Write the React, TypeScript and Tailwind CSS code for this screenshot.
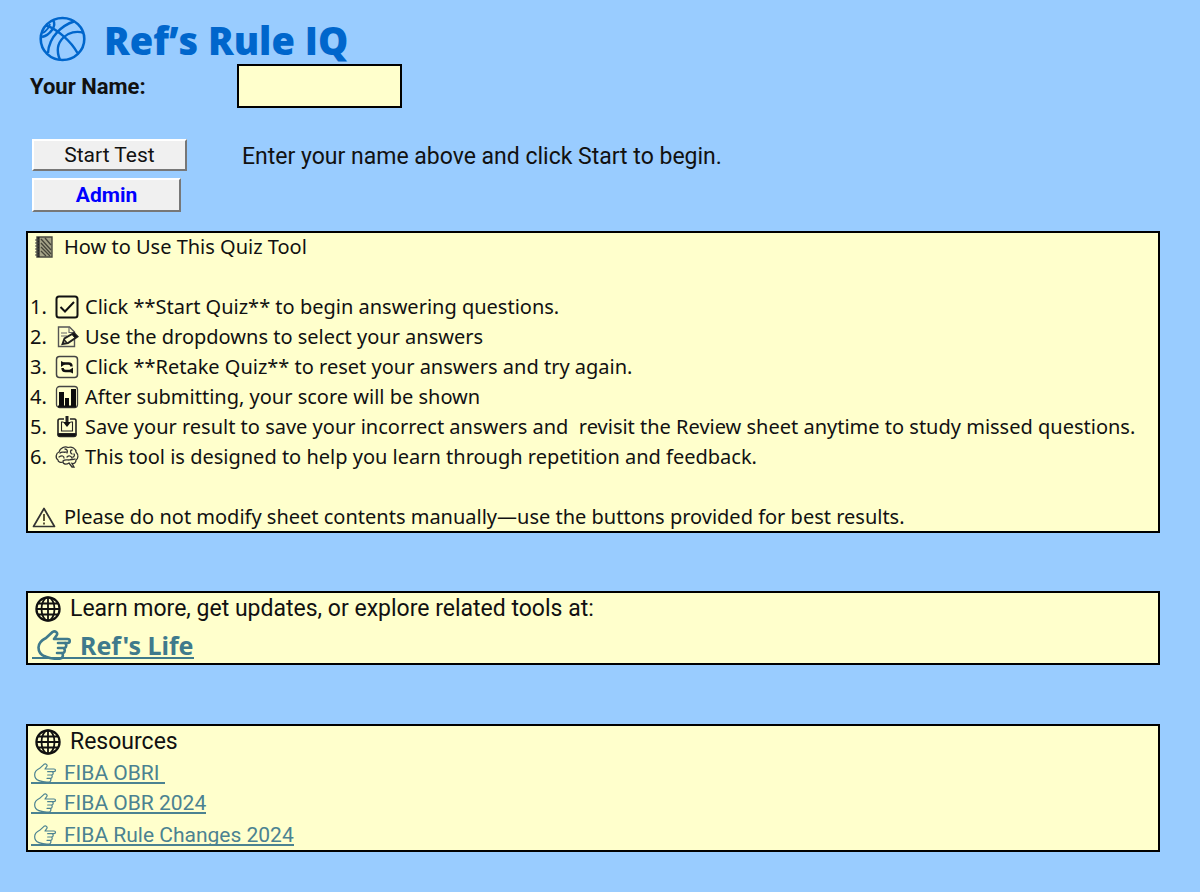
import type { ReactNode } from "react";

/* ── Icons ─────────────────────────────────────────────── */

function BasketballIcon() {
  return (
    <svg viewBox="0 0 48 48" className="h-12 w-12 shrink-0" fill="none" stroke="currentColor" strokeWidth="2.400" aria-hidden="true">
      <ellipse cx="24.500" cy="23" rx="21.800" ry="21" strokeWidth="2.600" />
      <path d="M8 9.500C19 13 33 25 39.500 37" />
      <path d="M36 5.500C25 9 11 20 10 37" />
      <path d="M46 17C31 12 14 25 22 44" />
      <path d="M15 4C19 10 12 19 4 21" />
      <path d="M12 8C11 12 8 15 5 17" strokeWidth="1.800" />
    </svg>
  );
}

function NotebookIcon() {
  return (
    <svg viewBox="0 0 22 24" className="h-6 w-[22px]" aria-hidden="true">
      <path d="M3 2h15v20H3z" fill="#a5a388" stroke="#4a4a40" strokeWidth="1.4" />
      <path d="M4.500 2v20" stroke="#222" strokeWidth="2.200" />
      <path d="M7 4l10 11M7 8l10 11M7 12l9 9M11 3l6 7M7 16l5 5" stroke="#45443a" strokeWidth="1.3" />
      <path d="M1 5h4M1 8h4M1 11h4M1 14h4M1 17h4M1 20h4" stroke="#444" />
    </svg>
  );
}

function CheckIcon() {
  return (
    <svg viewBox="0 0 24 24" className="h-6 w-6" fill="none" stroke="#111" strokeWidth="2" aria-hidden="true">
      <rect x="1.500" y="1.500" width="21" height="21" rx="2.500" />
      <path d="M5.500 12l4.500 4.500 9-9.500" />
    </svg>
  );
}

function MemoIcon() {
  return (
    <svg viewBox="0 0 24 24" className="h-6 w-6" fill="none" stroke="#222" aria-hidden="true">
      <path d="M3.500 2h11l5 5v14.500h-16z" stroke="#555" strokeWidth="1.4" />
      <path d="M14 2v5.500h5M6 8h6M6 11h6" stroke="#666" strokeWidth="1.1" />
      <path d="M7.500 19l2-5.500L19 8l3.500 3.500L13 18z" fill="#ffffcc" strokeWidth="1.900" />
      <path d="M19 8l3.500 3.500-2.500 1.500-3-3.500z" fill="#111" />
      <path d="M9 14.500l3 3.500" strokeWidth="1.4" />
    </svg>
  );
}

function RetakeIcon() {
  return (
    <svg viewBox="0 0 24 24" className="h-6 w-6" fill="none" stroke="#111" aria-hidden="true">
      <rect x="1.500" y="1.500" width="21" height="21" rx="3" stroke="#444" strokeWidth="1.5" />
      <path d="M8.500 8.500h5q3 0 3 3M15.500 16h-5q-3 0-3-3" strokeWidth="2.400" />
      <path d="M6 6v6l5-3.500zM18 18.500v-6L13 16z" fill="#111" stroke="none" />
    </svg>
  );
}

function ChartIcon() {
  return (
    <svg viewBox="0 0 24 24" className="h-6 w-6" aria-hidden="true">
      <rect x="1.500" y="1.500" width="21" height="21" rx="3" fill="none" stroke="#444" strokeWidth="1.3" />
      <path d="M4 7h5v15H4zM10 13h4v9h-4zM16 4h5v18h-5z" fill="#0c0c0c" />
      <path d="M3 21.500h18" stroke="#111" strokeWidth="2" />
    </svg>
  );
}

function SaveIcon() {
  return (
    <svg viewBox="0 0 24 24" className="h-6 w-6" fill="none" stroke="#222" aria-hidden="true">
      <path d="M9 4H4.500Q3 4 3 6v13.500q0 2 2 2h14q2 0 2-2V6q0-2-1.500-2H15" strokeWidth="1.600" />
      <path d="M8.500 7H6.500v9h11V7h-2" strokeWidth="1.1" />
      <path d="M3 18.500h18v1q0 2-2 2H5q-2 0-2-2z" fill="#111" strokeWidth="1" />
      <path d="M12 1v7" strokeWidth="3" />
      <path d="M8 7h8l-4 5z" fill="#111" stroke="none" />
    </svg>
  );
}

function BrainIcon() {
  return (
    <svg viewBox="0 0 24 24" className="h-6 w-6" fill="none" stroke="#333" strokeWidth="1.3" strokeLinecap="round" aria-hidden="true">
      <path d="M3 15C0 13 1 8 4 7C5 3 10 1 13 2.500C17 1 21 4 21 7C24 10 23 14 21 15C21 18 19 19 17 18.500L19 22H17L14 18C11 20 8 19 8 17C6 18 3 17 3 15Z" />
      <path d="M5 8C7 6 9 8 11 7M10 4C12 4 13 6 12 8M17 5C15 5 15 8 17 9M4 12C7 10 9 11 9 13M12 12C14 10 16 11 17 13M19 9C20 10 19 12 18 12M8 16C10 14 12 15 14 15C16 14 18 15 20 14" />
    </svg>
  );
}

function WarningIcon() {
  return (
    <svg viewBox="0 0 24 24" className="h-6 w-6" fill="none" stroke="#333" strokeWidth="1.7" strokeLinejoin="round" aria-hidden="true">
      <path d="M12 3.500L22.500 21.500h-21z" />
      <path d="M12 9v7M12 17.500v2" stroke="#5d5638" strokeWidth="2" />
    </svg>
  );
}

function GlobeIcon() {
  return (
    <svg viewBox="0 0 28 28" className="h-7 w-7" fill="none" stroke="#111" strokeWidth="1.800" aria-hidden="true">
      <circle cx="14" cy="14" r="11.600" strokeWidth="2.200" />
      <ellipse cx="14" cy="14" rx="6.500" ry="11.600" />
      <path d="M14 2v24M2 14h24M4 8.500h20M4 19.500h20" />
    </svg>
  );
}

function PointerIcon({ className }: { className: string }) {
  return (
    <svg viewBox="0 0 34 30" className={className} fill="none" stroke="currentColor" strokeLinecap="round" strokeLinejoin="round" aria-hidden="true">
      <path d="M8 26.500C4 25 1.500 22 1.500 17.500C1.500 13 5 10 9 8L15.500 2C18 0.500 21.500 2.500 19.500 5.500L17 9H30.500C33.500 9 33.500 13 30.500 13H21" />
      <path d="M28 13C30 14 29.500 18 27 18H21M26.500 18C28.500 19 28 23 25.500 23H20M25 23C26.500 24.500 26 28 23.500 28.500C17 29.500 12 28 8 26.500" />
    </svg>
  );
}

/* ── Content ───────────────────────────────────────────── */

const steps: { icon: ReactNode; text: string }[] = [
  { icon: <CheckIcon />, text: "Click **Start Quiz** to begin answering questions." },
  { icon: <MemoIcon />, text: "Use the dropdowns to select your answers" },
  { icon: <RetakeIcon />, text: "Click **Retake Quiz** to reset your answers and try again." },
  { icon: <ChartIcon />, text: "After submitting, your score will be shown" },
  {
    icon: <SaveIcon />,
    text: "Save your result to save your incorrect answers and  revisit the Review sheet anytime to study missed questions.",
  },
  { icon: <BrainIcon />, text: "This tool is designed to help you learn through repetition and feedback." },
];

const resources = ["FIBA OBRI ", "FIBA OBR 2024", "FIBA Rule Changes 2024"];

const panel = "border-2 border-black bg-[#ffffcc]";
const bevel =
  "border-2 border-t-white border-l-white border-r-[#777] border-b-[#777] bg-[#f0f0f0] text-[21px] leading-7";

export default function App() {
  return (
    <main className="min-h-screen bg-[#99ccff] pr-10 pb-10 pl-[26px] font-[Roboto,sans-serif] text-[21px] text-[#111]">
      <header className="flex h-16 items-center gap-[18px] pt-4 pl-3 text-[#0066cc]">
        <BasketballIcon />
        <h1 className="font-['Open_Sans',sans-serif] text-[38px] leading-[48px] font-extrabold">Ref’s Rule IQ</h1>
      </header>

      <form onSubmit={(e) => e.preventDefault()}>
        <div className="flex items-center pl-1">
          <label htmlFor="player" className="w-[207px] text-[22px] font-bold">
            Your Name:
          </label>
          <input id="player" type="text" className="h-11 w-[165px] border-2 border-black bg-[#ffffcc] px-2" />
        </div>

        <div className="mt-[31px] flex gap-[55px] pl-[6px]">
          <div className="flex w-[155px] flex-col gap-[7px]">
            <button type="submit" className={`${bevel} h-8 w-[155px]`}>
              Start Test
            </button>
            <button type="button" className={`${bevel} h-[34px] w-[149px] font-bold text-[#0000ff]`}>
              Admin
            </button>
          </div>
          <p className="text-[23px] leading-9">Enter your name above and click Start to begin.</p>
        </div>
      </form>

      <section className={`${panel} mt-[19px] font-['Noto_Sans',sans-serif] text-[20px]`}>
        <h2 className="flex h-7 items-center gap-2 pl-[6px]">
          <NotebookIcon />
          How to Use This Quiz Tool
        </h2>
        <ol className="mt-[31px]">
          {steps.map((step, i) => (
            <li key={i} className="flex min-h-[30px] items-center pl-[2px] leading-[30px]">
              <span className="w-[25px] shrink-0">{i + 1}.</span>
              <span className="mr-[6px] shrink-0">{step.icon}</span>
              <span className="whitespace-pre-wrap">{step.text}</span>
            </li>
          ))}
        </ol>
        <p className="mt-[31px] flex h-7 items-center gap-2 pl-1">
          <WarningIcon />
          Please do not modify sheet contents manually—use the buttons provided for best results.
        </p>
      </section>

      <section className={`${panel} mt-[58px] h-[74px]`}>
        <h2 className="flex h-8 items-center gap-2 pl-[6px] text-[23px]">
          <GlobeIcon />
          Learn more, get updates, or explore related tools at:
        </h2>
        <a
          href="#refs-life"
          className="mt-2 ml-1 inline-flex h-[26px] items-center gap-2 border-b-2 border-[#3f7a8c] pl-1 font-['Noto_Sans',sans-serif] text-[25px] leading-6 font-bold text-[#3f7a8c]"
        >
          <PointerIcon className="h-[30px] w-9 stroke-[2.600]" />
          Ref's Life
        </a>
      </section>

      <section className={`${panel} mt-[59px]`}>
        <h2 className="flex h-8 items-center gap-2 pl-[6px] text-[23px]">
          <GlobeIcon />
          Resources
        </h2>
        <ul className="flex flex-col">
          {resources.map((name) => (
            <li key={name} className="flex h-[30px] items-end pb-1 pl-[3px] last:h-8">
              <a
                href="#resources"
                className="flex h-5 items-center gap-[7px] border-b-2 border-[#4b8291] pl-[2px] leading-[18px] whitespace-pre text-[#4b8291]"
              >
                <PointerIcon className="h-5 w-6 stroke-[1.800]" />
                {name}
              </a>
            </li>
          ))}
        </ul>
      </section>
    </main>
  );
}
